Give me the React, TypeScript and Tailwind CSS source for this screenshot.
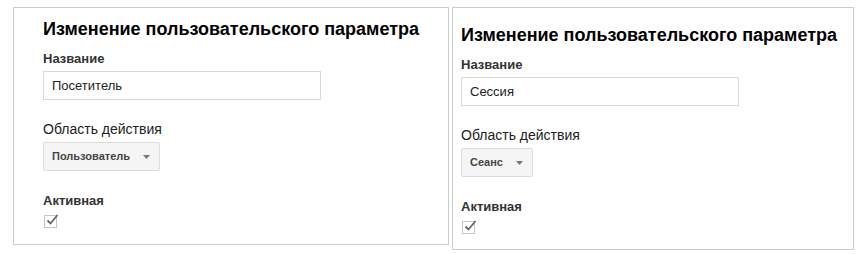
import React from "react";

function Checkbox() {
  return (
    <div className="relative w-[13px] h-[13px] border border-[#c6c6c6] bg-white ml-[1px]">
      <svg
        className="absolute left-[0px] top-[-3px]"
        width="15"
        height="14"
        viewBox="0 0 15 14"
      >
        <path d="M2.5 7.5 L5.5 10.5 L12.5 2" fill="none" stroke="#666" strokeWidth="1.8" />
      </svg>
    </div>
  );
}

function Panel({
  name,
  scope,
  width,
  height,
  padL,
  padT,
}: {
  name: string;
  scope: string;
  width: string;
  height: string;
  padL: string;
  padT: string;
}) {
  return (
    <div className={`border border-[#cccccc] bg-white ${width} ${height} ${padL} ${padT}`}>
      <h2 className="text-[18px] font-bold leading-[22px] text-black">
        Изменение пользовательского параметра
      </h2>
      <div className="mt-[11px] text-[13px] font-bold leading-[16px] text-[#333]">Название</div>
      <div className="mt-[4px] w-[278px] h-[29px] border border-[#d9d9d9] pl-[8px] flex items-center text-[13px] text-[#222]">
        {name}
      </div>
      <div className="mt-[21px] text-[14px] leading-[16px] text-[#222]">Область действия</div>
      <div className="mt-[5px] inline-flex items-center h-[29px] pl-[8px] pr-[9px] bg-[#f5f5f5] border border-[#dcdcdc] rounded-[2px]">
        <span className="text-[11px] font-bold text-[#444]">{scope}</span>
        <svg className="ml-[13px]" width="7" height="4" viewBox="0 0 7 4">
          <path d="M0 0 L7 0 L3.5 4 Z" fill="#777" />
        </svg>
      </div>
      <div className="mt-[22px] text-[13px] font-bold leading-[16px] text-[#333]">Активная</div>
      <div className="mt-[6px]">
        <Checkbox />
      </div>
    </div>
  );
}

export default function App() {
  return (
    <div className="w-[860px] h-[254px] bg-white font-['Liberation_Sans',Arial,sans-serif]">
      <div className="flex items-start gap-[3px] pl-[13px] pt-[7px]">
        <Panel
          name="Посетитель"
          scope="Пользователь"
          width="w-[436px]"
          height="h-[238px]"
          padL="pl-[29px]"
          padT="pt-[10px]"
        />
        <Panel
          name="Сессия"
          scope="Сеанс"
          width="w-[402px]"
          height="h-[243px]"
          padL="pl-[8px]"
          padT="pt-[16px]"
        />
      </div>
    </div>
  );
}
